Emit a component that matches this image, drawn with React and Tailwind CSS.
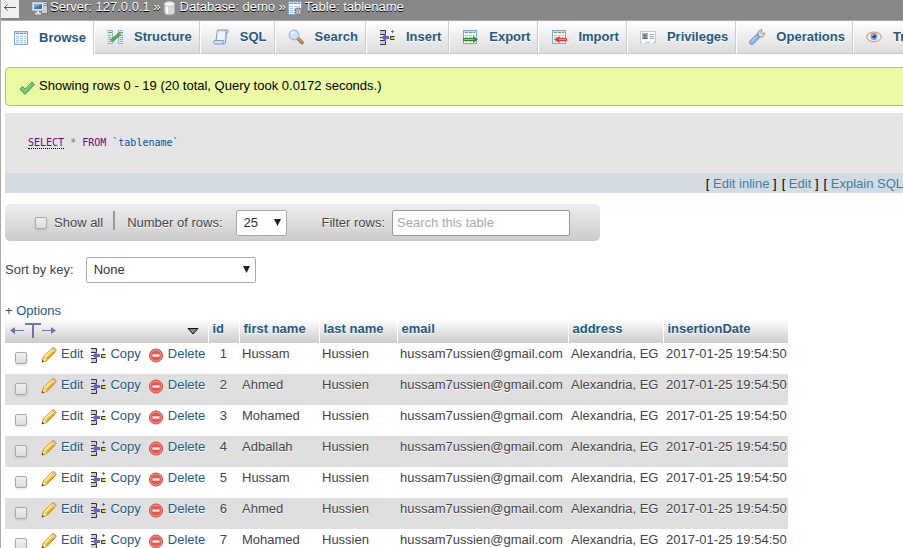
const tabs = [
    { name: "Browse", Icon: BrowseIcon, active: true },
    { name: "Structure", Icon: StructureIcon },
    { name: "SQL", Icon: SqlIcon },
    { name: "Search", Icon: SearchIcon },
    { name: "Insert", Icon: InsertIcon },
    { name: "Export", Icon: ExportIcon },
    { name: "Import", Icon: ImportIcon },
    { name: "Privileges", Icon: PrivilegesIcon },
    { name: "Operations", Icon: OperationsIcon },
    { name: "Triggers", Icon: EyeIcon },
];

const columns = ["id", "first name", "last name", "email", "address", "insertionDate"];

const rows = ["Hussam", "Ahmed", "Mohamed", "Adballah", "Hussam", "Ahmed", "Mohamed"].map((name, i) => ({
    id: i + 1,
    firstName: name,
    lastName: "Hussien",
    email: "hussam7ussien@gmail.com",
    address: "Alexandria, EG",
    insertionDate: "2017-01-25 19:54:50",
}));

function Svg({ children }) {
    return (
        <svg className="block h-4 w-4 shrink-0" viewBox="0 0 16 16" fill="none" aria-hidden="true">
            {children}
        </svg>
    );
}

function Sheet() {
    return (
        <>
            <rect x="1.5" y="1.5" width="13" height="13" fill="#f4f8fd" stroke="#7fa3d6" />
            <rect x="2" y="2" width="12" height="2" fill="#c3d8f2" />
            <path d="M3 3.5h3M7 3.5h3M11 3.5h2" stroke="#63b04c" />
            <path d="M3 6.5h3M7 6.5h3M11 6.5h2M3 8.5h3M7 8.5h3M11 8.5h2M3 10.5h3M7 10.5h3M11 10.5h2M3 12.5h3M7 12.5h3M11 12.5h2" stroke="#a9c4e8" />
        </>
    );
}

function BrowseIcon() {
    return <Svg><Sheet /></Svg>;
}

function StructureIcon() {
    return (
        <Svg>
            <path d="M0 1.5h5.500v13H0zM11 1.500h5v13h-5z" fill="#dce9f8" />
            <path d="M0 1.500h5.500v13H0M16 1.500h-4.500v13H16" stroke="#93b4df" />
            <path d="M1 3.500h4M12 3.500h4" stroke="#63b04c" />
            <path d="M1 6.500h3M1 8.500h3M1 10.500h3M1 12.500h3M13 6.500h3M13 8.500h3M13 10.500h3M13 12.500h3" stroke="#8fb1df" />
            <path d="M5.500 11L12 5.500" stroke="#3b8a3c" strokeWidth="3" />
            <path d="M5.500 11L12 5.500" stroke="#62b558" strokeWidth="1.500" />
            <circle cx="5.500" cy="11" r="2" fill="#58a84f" />
            <circle cx="12" cy="5.500" r="2" fill="#58a84f" />
        </Svg>
    );
}

function SqlIcon() {
    return (
        <Svg>
            <path d="M4.500 1h9c1.500 0 2 .7 2 1.500S14.800 4 14 4h-.7l-.8 9c0 1.200-.6 2-1.500 2H2.500C1 15 .5 14.200.5 13.200s.5-1.700 1.500-1.700h1z" fill="#cfe2fa" stroke="#6c99d8" />
            <path d="M4.800 2.500h7.200l-.8 9H4z" fill="#edf5ff" />
            <path d="M3 11.500h7.500c-1 .8-.8 2.500.2 3.500M13.200 4c-.8-.8-.6-2 .3-3" stroke="#6c99d8" />
        </Svg>
    );
}

function SearchIcon() {
    return (
        <Svg>
            <path d="M10 9.500l4 4" stroke="#9a6530" strokeWidth="3.400" strokeLinecap="round" />
            <path d="M10.500 9.700l3.300 3.300" stroke="#e0a260" strokeWidth="1.500" strokeLinecap="round" />
            <circle cx="6" cy="6" r="4.700" fill="#cde3fb" stroke="#a3bbdc" strokeWidth="1.400" />
            <path d="M3.500 5.500a3 3 0 0 1 3-2.500" stroke="#fff" strokeWidth="1.400" />
        </Svg>
    );
}

function InsertIcon() {
    return (
        <Svg>
            <path d="M1 2h5v4H1zM1 11h5v4H1z" fill="#ccc" />
            <path d="M1 1.500h5.500v4H1M1 15.500h5.500v-4H1M1 8.500h2" stroke="#333" />
            <path d="M2.500 8.500L7 4v3h3v3H7v3z" fill="#6464d0" />
            <rect x="11.500" y="7.500" width="4" height="3" fill="#fc3" />
            <path d="M15.500 7.500h-4v3h4" stroke="#333" />
            <path d="M13.500 1v3M12 2.500h3" stroke="#6464d0" />
        </Svg>
    );
}

function ExportIcon() {
    return (
        <Svg>
            <Sheet />
            <path d="M1 9h10V7l5 3.500-5 3.500v-2H1z" fill="#2f8a33" />
            <path d="M2 10.500h10" stroke="#84cc7d" />
        </Svg>
    );
}

function ImportIcon() {
    return (
        <Svg>
            <Sheet />
            <path d="M16 9H8.500V7L3 10.500 8.500 14v-2H16z" fill="#e83838" />
            <path d="M8 10.500h7" stroke="#ffaaaa" />
        </Svg>
    );
}

function PrivilegesIcon() {
    return (
        <Svg>
            <rect x=".5" y="2.500" width="15" height="11" fill="#fafafa" stroke="#c8c8c8" />
            <rect x="2" y="4" width="6" height="6" fill="#80bdf0" />
            <circle cx="5" cy="6.500" r="1.700" fill="#a66b38" />
            <path d="M2.500 10c.5-2 4.500-2 5 0z" fill="#346bb0" />
            <path d="M9.500 5.500H14M9.500 7.500H14M9.500 9.500H14" stroke="#98a9bd" />
            <path d="M2 13.500h3M10 13.500h3" stroke="#fff" />
        </Svg>
    );
}

function OperationsIcon() {
    return (
        <Svg>
            <path d="M7 8.500l3.500-3.500" stroke="#8d8d8d" strokeWidth="3.500" />
            <path d="M9 6V3l2.500-2.300 1.500.4-1 2.400 1.200 1.200 2.200-.8.3 1.300L13.500 8H10z" fill="#dedede" stroke="#8d8d8d" />
            <path d="M2.800 13.300L8 8" stroke="#5f8ad0" strokeWidth="5" strokeLinecap="round" />
            <path d="M2.800 13.300L8 8" stroke="#8fb6ef" strokeWidth="3.600" strokeLinecap="round" />
            <path d="M2.500 12.500L7 8" stroke="#c8ddfa" />
        </Svg>
    );
}

function EyeIcon() {
    return (
        <Svg>
            <path d="M.5 8C3 1.500 13 1.500 15.500 8 13 14.500 3 14.500.5 8z" fill="#fff5ed" stroke="#d9a178" strokeWidth="1.200" />
            <path d="M2.500 8C5 3.500 11 3.500 13.500 8 11 12.500 5 12.500 2.500 8z" fill="#fff" stroke="#e5c2a8" strokeWidth=".6" />
            <circle cx="8" cy="7.500" r="3.400" fill="#6998e4" />
            <circle cx="8" cy="7.300" r="1.500" fill="#152c60" />
            <circle cx="7" cy="6.200" r=".7" fill="#fff" />
        </Svg>
    );
}

function ServerIcon() {
    return (
        <Svg>
            <path d="M9.500 1.500h6v12h-6z" fill="#d2d2d2" stroke="#777" />
            <path d="M12 3.500h3M12 5.500h3" stroke="#888" />
            <rect x=".5" y="2.500" width="11" height="8" fill="#e8e8e8" stroke="#c5c5c5" />
            <rect x="2" y="4" width="8" height="5" fill="#3e73bd" />
            <path d="M2 4h8L2 8z" fill="#78a7e3" />
            <path d="M6 11v2M3 13.500h6" stroke="#ddd" strokeWidth="2" />
        </Svg>
    );
}

function DatabaseIcon() {
    return (
        <Svg>
            <path d="M2.500 4v8.500c0 3 10 3 10 0V4z" fill="#dadada" stroke="#b5b5b5" />
            <path d="M4 5h2v9l-2-.8z" fill="#fff" />
            <ellipse cx="7.500" cy="4" rx="5" ry="2.300" fill="#f6f6f6" stroke="#c5c5c5" />
        </Svg>
    );
}

function TableIcon() {
    return (
        <Svg>
            <Sheet />
            <circle cx="11.500" cy="11.500" r="3" fill="#ccc" stroke="#777" strokeWidth="2.400" strokeDasharray="1.600 .8" />
            <circle cx="11.500" cy="11.500" r="2.400" fill="#ddd" stroke="#999" />
            <circle cx="11.500" cy="11.500" r="1" fill="#777" />
        </Svg>
    );
}

function CheckIcon() {
    return (
        <Svg>
            <path d="M1 9l2.500-2.500L6 9.200 13 2l2.500 2.500L6 14.500z" fill="#6abf69" stroke="#4f9a50" strokeLinejoin="round" />
            <path d="M2.500 9l1-1L6 10.700 13 3.500" stroke="#a2dfa0" />
        </Svg>
    );
}

function PencilIcon() {
    return (
        <Svg>
            <path d="M1 15l1.500-5.200L11 1.300c1-.9 2-.6 3 .3s1.300 2 .4 3L6 13.300z" fill="#f9d84a" stroke="#b97b26" strokeLinejoin="round" />
            <path d="M3.500 10L11 2.500" stroke="#fff0a0" strokeWidth="1.200" />
            <path d="M5.500 12L13 4.700" stroke="#e0a028" strokeWidth="1.200" />
            <path d="M10.200 2.800l1.300-1.300c1-.6 3.400 1.500 2.700 2.700L13 5.500z" fill="#f3c39a" />
            <path d="M1.500 14.500l1.200-4 2.800 2.800z" fill="#f8dcb4" />
            <path d="M.8 15.200l.7-2.200L3 14.500z" fill="#333" />
        </Svg>
    );
}

function DeleteIcon() {
    return (
        <Svg>
            <circle cx="8" cy="8.500" r="6.500" fill="#e8584c" stroke="#cf4038" />
            <circle cx="8" cy="8.500" r="5.500" stroke="#f59a90" />
            <path d="M4.500 8.500h7" stroke="#fff" strokeWidth="2.200" />
        </Svg>
    );
}

function FullTextIcon() {
    return (
        <svg className="block h-4 w-12" viewBox="0 0 48 16" fill="none" stroke="#6a76b4" aria-hidden="true">
            <path d="M3 7.500h12M33 7.500h11" />
            <path d="M1 7.500l5-3.500v7zM47 7.500l-5-3.500v7z" fill="#6a76b4" stroke="none" />
            <path d="M16 1h16M24 1v14" strokeWidth="2" />
        </svg>
    );
}

function Select({ id, options, className }) {
    return (
        <div className={"relative " + className}>
            <select id={id} className="h-[26px] w-full appearance-none rounded-xs border border-[#aaa] bg-white pl-[7px] text-[13px] text-[#333]">
                {options.map((option) => <option key={option}>{option}</option>)}
            </select>
            <svg className="pointer-events-none absolute right-[6px] top-[9px] h-[7px] w-[7px]" viewBox="0 0 7 7" aria-hidden="true">
                <path d="M0 0h7L3.500 7z" fill="#222" />
            </svg>
        </div>
    );
}

function Checkbox({ id, label }) {
    return (
        <input
            id={id}
            type="checkbox"
            aria-label={label}
            className="block h-3 w-3 shrink-0 appearance-none rounded-xs border border-[#aaa] bg-linear-to-b from-[#f0f0f0] to-[#ddd] shadow-sm"
        />
    );
}

function Action({ Icon, children }) {
    return (
        <a href="#" className="flex items-start gap-1 text-[#235a81]">
            <span className="pt-px"><Icon /></span>
            {children}
        </a>
    );
}

export default function App() {
    return (
        <div className="h-screen overflow-hidden bg-white font-['Liberation_Sans',Arial,sans-serif] text-[13px] leading-4 text-[#444]">
            <div className="border-l border-[#aaa]">
                <header className="flex h-5 items-start bg-[#888] leading-[14px] text-white [text-shadow:0_1px_0_#000]">
                    <button className="flex h-[18px] w-[18px] items-start justify-center bg-[#f0f0f0]" aria-label="Hide panel">
                        <svg className="h-4 w-4" viewBox="0 0 16 16" fill="none" stroke="#555" aria-hidden="true">
                            <path d="M2 7.500h12M5.500 4.500l-3 3 3 3" />
                        </svg>
                    </button>
                    <nav className="flex items-start whitespace-pre pl-[13px]">
                        <ServerIcon />
                        <a href="#" className="pl-[2px]">Server: 127.0.0.1</a>
                        <span className="pr-px"> »</span>
                        <DatabaseIcon />
                        <a href="#" className="pl-[2px]">Database: demo</a>
                        <span className="pr-px"> »</span>
                        <TableIcon />
                        <a href="#" className="pl-[2px]">Table: tablename</a>
                    </nav>
                </header>

                <nav className="flex overflow-hidden border-t border-[#aaa] [text-shadow:0_1px_0_#fff]">
                    {tabs.map(({ name, Icon, active }) => (
                        <a
                            key={name}
                            href="#"
                            className={active
                                ? "flex h-[33px] shrink-0 items-center gap-[10px] border-r border-[#ccc] bg-white pl-3 pr-[7px] font-bold text-[#235a81]"
                                : "flex h-[33px] shrink-0 items-center gap-[11px] border-b border-l border-r border-b-[#ccc] border-l-white border-r-[#ccc] bg-linear-to-b from-white to-[#dcdcdc] pl-3 pr-[7px] font-bold text-[#235a81]"}
                        >
                            <Icon />
                            {name}
                        </a>
                    ))}
                </nav>

                <main className="pl-1">
                    <div className="mt-[13px] flex h-[39px] items-center gap-1 rounded-l-[5px] border border-r-0 border-[#a2d246] bg-[#ebf8a4] pb-[2px] pl-[13px] text-black">
                        <span className="pt-1"><CheckIcon /></span>
                        Showing rows 0 - 19 (20 total, Query took 0.0172 seconds.)
                    </div>

                    <div className="mt-[7px] bg-[#e5e5e5]">
                        <div className="flex h-[60px] items-center pl-[23px] text-[10px] leading-[14px]">
                            <code className="whitespace-pre font-['DejaVu_Sans_Mono',monospace]">
                                <a href="#" className="border-b border-dotted border-black text-[#708]">SELECT</a>
                                <span className="text-[#777]"> * </span>
                                <span className="text-[#708]">FROM </span>
                                <span className="text-[#05a]">`tablename`</span>
                            </code>
                        </div>
                        <div className="flex h-5 items-center justify-end gap-[5px] bg-[#d3dce3] pt-[2px] text-black">
                            <span>[ <a href="#" className="text-[#3a7ead]">Edit inline</a> ]</span>
                            <span>[ <a href="#" className="text-[#3a7ead]">Edit</a> ]</span>
                            <span>[ <a href="#" className="text-[#3a7ead]">Explain SQL</a></span>
                        </div>
                    </div>

                    <div className="mt-[11px] flex h-[37px] w-fit items-center rounded-[5px] bg-linear-to-b from-[#eee] to-[#ccc] px-[30px] [text-shadow:0_1px_0_#fff]">
                        <Checkbox id="showAll" />
                        <label htmlFor="showAll" className="pl-[7px]">Show all</label>
                        <span className="mb-1 ml-[10px] mr-3 h-[19px] border-l-2 border-[#999]"></span>
                        <label htmlFor="numRows">Number of rows:</label>
                        <Select id="numRows" options={["25", "50", "100"]} className="ml-[13px] w-[51px]" />
                        <label htmlFor="filter" className="pl-[35px]">Filter rows:</label>
                        <input id="filter" type="text" placeholder="Search this table" className="ml-[7px] h-[26px] w-[178px] rounded-xs border border-[#999] bg-white px-1 placeholder:text-[#aaa]" />
                    </div>

                    <div className="mt-4 flex items-center gap-3">
                        <label htmlFor="sortKey">Sort by key:</label>
                        <Select id="sortKey" options={["None"]} className="w-[170px]" />
                    </div>

                    <a href="#" className="mt-5 block w-fit text-[#235a81]">+ Options</a>

                    <table className="w-[783px] table-fixed border-collapse">
                        <colgroup>
                            <col className="w-[203px]" />
                            <col className="w-[31px]" />
                            <col className="w-[80px]" />
                            <col className="w-[78px]" />
                            <col className="w-[171px]" />
                            <col className="w-[95px]" />
                            <col />
                        </colgroup>
                        <thead>
                            <tr className="h-6 bg-linear-to-b from-white to-[#ccc]">
                                <th className="border-r border-white pl-1 pr-[9px]">
                                    <div className="flex items-center justify-between">
                                        <FullTextIcon />
                                        <svg className="h-[7px] w-3" viewBox="0 0 12 7" aria-hidden="true">
                                            <path d="M1 .5h10L6 6z" fill="#888" stroke="#111" />
                                        </svg>
                                    </div>
                                </th>
                                {columns.map((column) => (
                                    <th key={column} className="border-r border-white pb-1 pl-1 pr-0 text-left text-[#235a81] [text-shadow:0_1px_0_#fff] last:border-r-0">
                                        <a href="#">{column}</a>
                                    </th>
                                ))}
                            </tr>
                        </thead>
                        <tbody>
                            {rows.map((row) => (
                                <tr key={row.id} className="h-[31px] align-top odd:bg-white even:bg-[#dfdfdf] [&>td]:whitespace-nowrap [&>td]:pt-[3px] [&>td]:pl-[3px] [text-shadow:0_1px_0_#fff]">
                                    <td>
                                        <div className="flex items-start gap-[7px] pl-[7px]">
                                            <span className="pr-[7px] pt-[6px]"><Checkbox label={"Select row " + row.id} /></span>
                                            <Action Icon={PencilIcon}>Edit</Action>
                                            <Action Icon={InsertIcon}>Copy</Action>
                                            <Action Icon={DeleteIcon}>Delete</Action>
                                        </div>
                                    </td>
                                    <td className="pr-3 text-right">{row.id}</td>
                                    <td>{row.firstName}</td>
                                    <td>{row.lastName}</td>
                                    <td>{row.email}</td>
                                    <td>{row.address}</td>
                                    <td>{row.insertionDate}</td>
                                </tr>
                            ))}
                        </tbody>
                    </table>
                </main>
            </div>
        </div>
    );
}
